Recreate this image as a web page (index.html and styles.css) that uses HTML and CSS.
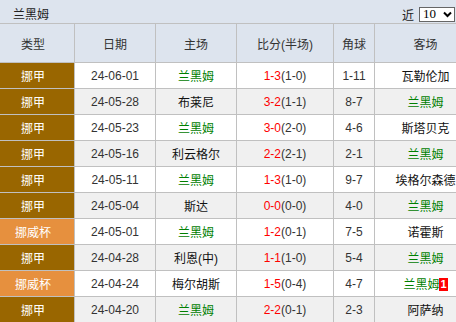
FILE: index.html
```html
<!DOCTYPE html>
<html>
<head>
<meta charset="utf-8">
<link rel="stylesheet" href="styles.css">
</head>
<body>
<div class="panel">
  <div class="titlebar">
    <span class="title">兰黑姆</span>
    <div class="filter">
      <span class="near">近</span>
      <div class="select"><span>10</span><svg width="9" height="7" viewBox="0 0 9 7"><path d="M1 1.5 L4.5 5 L8 1.5" fill="none" stroke="#000" stroke-width="2"/></svg></div>
    </div>
  </div>
  <div class="tablewrap">
    <table class="matches">
      <colgroup>
        <col class="c-type"><col class="c-date"><col class="c-home"><col class="c-score"><col class="c-corner"><col class="c-away">
      </colgroup>
      <thead>
        <tr><th>类型</th><th>日期</th><th>主场</th><th>比分(半场)</th><th>角球</th><th>客场</th></tr>
      </thead>
      <tbody>
        <tr><td class="lg lg-a">挪甲</td><td>24-06-01</td><td class="hl">兰黑姆</td><td><span class="ft">1-3</span>(1-0)</td><td>1-11</td><td class="team">瓦勒伦加</td></tr>
        <tr class="alt"><td class="lg lg-a">挪甲</td><td>24-05-28</td><td class="team">布莱尼</td><td><span class="ft">3-2</span>(1-1)</td><td>8-7</td><td class="hl">兰黑姆</td></tr>
        <tr><td class="lg lg-a">挪甲</td><td>24-05-23</td><td class="hl">兰黑姆</td><td><span class="ft">3-0</span>(2-0)</td><td>4-6</td><td class="team">斯塔贝克</td></tr>
        <tr class="alt"><td class="lg lg-a">挪甲</td><td>24-05-16</td><td class="team">利云格尔</td><td><span class="ft">2-2</span>(2-1)</td><td>2-1</td><td class="hl">兰黑姆</td></tr>
        <tr><td class="lg lg-a">挪甲</td><td>24-05-11</td><td class="hl">兰黑姆</td><td><span class="ft">1-3</span>(1-0)</td><td>9-7</td><td class="team">埃格尔森德</td></tr>
        <tr class="alt"><td class="lg lg-a">挪甲</td><td>24-05-04</td><td class="team">斯达</td><td><span class="ft">0-0</span>(0-0)</td><td>4-0</td><td class="hl">兰黑姆</td></tr>
        <tr><td class="lg lg-b">挪威杯</td><td>24-05-01</td><td class="hl">兰黑姆</td><td><span class="ft">1-2</span>(0-1)</td><td>7-5</td><td class="team">诺霍斯</td></tr>
        <tr class="alt"><td class="lg lg-a">挪甲</td><td>24-04-28</td><td class="team">利恩(中)</td><td><span class="ft">1-1</span>(1-0)</td><td>5-4</td><td class="hl">兰黑姆</td></tr>
        <tr><td class="lg lg-b">挪威杯</td><td>24-04-24</td><td class="team">梅尔胡斯</td><td><span class="ft">1-5</span>(0-4)</td><td>4-7</td><td class="hl">兰黑姆<span class="badge">1</span></td></tr>
        <tr class="alt"><td class="lg lg-a">挪甲</td><td>24-04-20</td><td class="hl">兰黑姆</td><td><span class="ft">2-2</span>(0-1)</td><td>2-3</td><td class="team">阿萨纳</td></tr>
      </tbody>
    </table>
  </div>
</div>
</body>
</html>
```
FILE: styles.css
```css
html, body {
  margin: 0;
  padding: 0;
  background: #fff;
}
body {
  font-family: "Liberation Sans", "Noto Sans CJK SC", sans-serif;
  font-size: 12px;
  color: #333;
  width: 456px;
  height: 322px;
  overflow: hidden;
}
.panel {
  width: 456px;
}
.titlebar {
  height: 23px;
  background: #dde4ee;
  border-bottom: 1px solid #c0c0c0;
  display: flex;
  align-items: center;
  justify-content: space-between;
  padding: 0 1px 0 13px;
}
.title {
  font-size: 12px;
  color: #222;
  padding-top: 3px;
}
.filter {
  display: flex;
  align-items: center;
  gap: 5px;
  padding-top: 5px;
}
.near {
  font-size: 12px;
  color: #222;
}
.select {
  box-sizing: border-box;
  width: 36px;
  height: 15px;
  border: 1px solid #666;
  background: #fff;
  display: flex;
  align-items: center;
  justify-content: space-between;
  padding: 0 2px 0 3px;
  font-family: "Liberation Serif", serif;
  font-size: 13px;
  color: #000;
}
.tablewrap {
  width: 456px;
  overflow: hidden;
}
.matches {
  margin-left: -8px;
  width: 484px;
  table-layout: fixed;
  border-collapse: separate;
  border-spacing: 0;
}
.c-type { width: 83px; }
.c-date { width: 81px; }
.c-home { width: 81px; }
.c-score { width: 97px; }
.c-corner { width: 41px; }
.c-away { width: 101px; }
.matches th,
.matches td {
  box-sizing: border-box;
  padding: 0;
  text-align: center;
  border-right: 1px solid #c0c0c0;
  border-bottom: 1px solid #c0c0c0;
  white-space: nowrap;
  font-size: 12px;
}
.matches th:last-child,
.matches td:last-child {
  border-right: none;
}
.matches th {
  height: 39px;
  background: #dde4ee;
  font-weight: normal;
  color: #333;
  padding-top: 1px;
}
.matches td {
  height: 26px;
  color: #333;
}
.matches tr.alt td {
  background: #f0f0f0;
}
.matches td.lg {
  color: #fff;
}
.matches td.lg-a,
.matches tr.alt td.lg-a {
  background: #996600;
}
.matches td.lg-b,
.matches tr.alt td.lg-b {
  background: #e6903e;
}
.matches td.hl {
  color: #008000;
}
.matches td.team {
  color: #111;
}
.ft {
  color: #ff0000;
}
.badge {
  display: inline-block;
  background: #ff0000;
  color: #fff;
  font-weight: bold;
  font-size: 11px;
  line-height: 13px;
  padding: 0 1px;
  vertical-align: 1px;
}
```
